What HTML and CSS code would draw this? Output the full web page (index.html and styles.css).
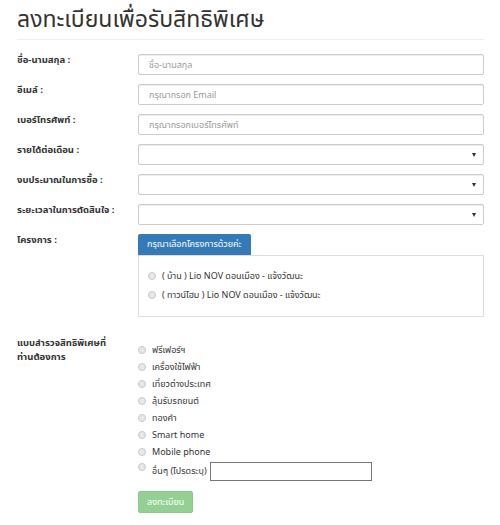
FILE: index.html
```html
<!DOCTYPE html>
<html>

<head>
	<meta charset="utf-8">
	<title>ลงทะเบียนเพื่อรับสิทธิพิเศษ</title>
	<link rel="stylesheet" href="styles.css">
</head>

<body>
	<div class="page">
		<h1 class="title">ลงทะเบียนเพื่อรับสิทธิพิเศษ</h1>

		<form class="form">
			<div class="row">
				<label class="lbl">ชื่อ-นามสกุล :</label>
				<input class="ctl" type="text" placeholder="ชื่อ-นามสกุล">
			</div>
			<div class="row">
				<label class="lbl">อีเมล์ :</label>
				<input class="ctl" type="text" placeholder="กรุณากรอก Email">
			</div>
			<div class="row">
				<label class="lbl">เบอร์โทรศัพท์ :</label>
				<input class="ctl" type="text" placeholder="กรุณากรอกเบอร์โทรศัพท์">
			</div>
			<div class="row">
				<label class="lbl">รายได้ต่อเดือน :</label>
				<div class="ctl sel"><span class="caret"></span></div>
			</div>
			<div class="row">
				<label class="lbl">งบประมาณในการซื้อ :</label>
				<div class="ctl sel"><span class="caret"></span></div>
			</div>
			<div class="row">
				<label class="lbl">ระยะเวลาในการตัดสินใจ :</label>
				<div class="ctl sel"><span class="caret"></span></div>
			</div>

			<div class="row project">
				<label class="lbl">โครงการ :</label>
				<div>
					<div class="tab">กรุณาเลือกโครงการด้วยค่ะ</div>
					<div class="box">
						<div class="opt"><span class="radio"></span>( บ้าน ) Lio NOV ดอนเมือง - แจ้งวัฒนะ</div>
						<div class="opt"><span class="radio"></span>( ทาวน์โฮม ) Lio NOV ดอนเมือง - แจ้งวัฒนะ</div>
					</div>
				</div>
			</div>

			<div class="row survey">
				<label class="lbl">แบบสำรวจสิทธิพิเศษที่<br>ท่านต้องการ</label>
				<div class="choices">
					<div class="opt"><span class="radio"></span>ฟรีเฟอร์ฯ</div>
					<div class="opt"><span class="radio"></span>เครื่องใช้ไฟฟ้า</div>
					<div class="opt"><span class="radio"></span>เที่ยวต่างประเทศ</div>
					<div class="opt"><span class="radio"></span>ลุ้นรับรถยนต์</div>
					<div class="opt"><span class="radio"></span>ทองคำ</div>
					<div class="opt"><span class="radio"></span>Smart home</div>
					<div class="opt"><span class="radio"></span>Mobile phone</div>
					<div class="opt other"><span class="radio"></span>อื่นๆ (โปรดระบุ)<input class="other-input" type="text"></div>
				</div>
			</div>

			<div class="row">
				<span></span>
				<div><button class="submit" type="button">ลงทะเบียน</button></div>
			</div>
		</form>
	</div>
</body>

</html>
```

FILE: styles.css
```css
* {
	box-sizing: border-box;
}

body {
	margin: 0;
	background: #fff;
	color: #333;
	font-family: "Noto Sans Thai", "Liberation Sans", "DejaVu Sans", sans-serif;
	font-size: 10px;
}

.page {
	padding: 8px 16px 0 17px;
}

.title {
	margin: 0;
	padding: 0 0 7px;
	font-size: 23px;
	font-weight: normal;
	line-height: 24px;
	border-bottom: 1px solid #eee;
}

.form {
	padding-top: 14px;
}

.row {
	display: grid;
	grid-template-columns: 121px 1fr;
	margin-bottom: 9px;
}

.lbl {
	font-weight: bold;
	font-size: 9.5px;
	line-height: 12px;
}

.ctl {
	display: block;
	width: 100%;
	height: 21px;
	padding: 0 10px;
	border: 1px solid #ccc;
	border-radius: 2px;
	box-shadow: inset 0 1px 1px rgba(0, 0, 0, .075);
	font: inherit;
	font-size: 9px;
	color: #555;
}

.ctl::placeholder {
	color: #999;
}

.sel {
	position: relative;
}

.caret {
	position: absolute;
	right: 7px;
	top: 8px;
	border-left: 2px solid transparent;
	border-right: 2px solid transparent;
	border-top: 4px solid #333;
}

.project {
	margin-top: 3px;
}

.tab {
	width: fit-content;
	height: 21px;
	line-height: 21px;
	padding: 0 9px;
	background: #337ab7;
	color: #fff;
	border-radius: 2px 2px 0 0;
	font-size: 9px;
}

.box {
	height: 62px;
	border: 1px solid #ddd;
	padding: 10px 9px 0;
}

.opt {
	display: flex;
	align-items: center;
	height: 19px;
	font-size: 9px;
	color: #333;
}

.radio {
	width: 8px;
	height: 8px;
	margin-right: 6px;
	border-radius: 50%;
	border: 1px solid #c8c8c8;
	background: #e8e8e8;
}

.survey {
	margin-top: 19px;
}

.survey .lbl {
	line-height: 14px;
}

.choices {
	padding-top: 5px;
}

.choices .opt {
	height: 17px;
}

.choices .other {
	height: 22px;
}

.other .radio {
	align-self: flex-start;
	margin-top: 3px;
}

.other-input {
	width: 162px;
	height: 19px;
	margin-left: 3px;
	border: 1px solid #767676;
	border-radius: 0;
	padding: 0 3px;
}

.submit {
	margin-top: 0;
	height: 22px;
	padding: 0 8px;
	background: #5cb85c;
	opacity: .65;
	color: #fff;
	border: 1px solid #4cae4c;
	border-radius: 2px;
	font: inherit;
	font-size: 9px;
}
```
